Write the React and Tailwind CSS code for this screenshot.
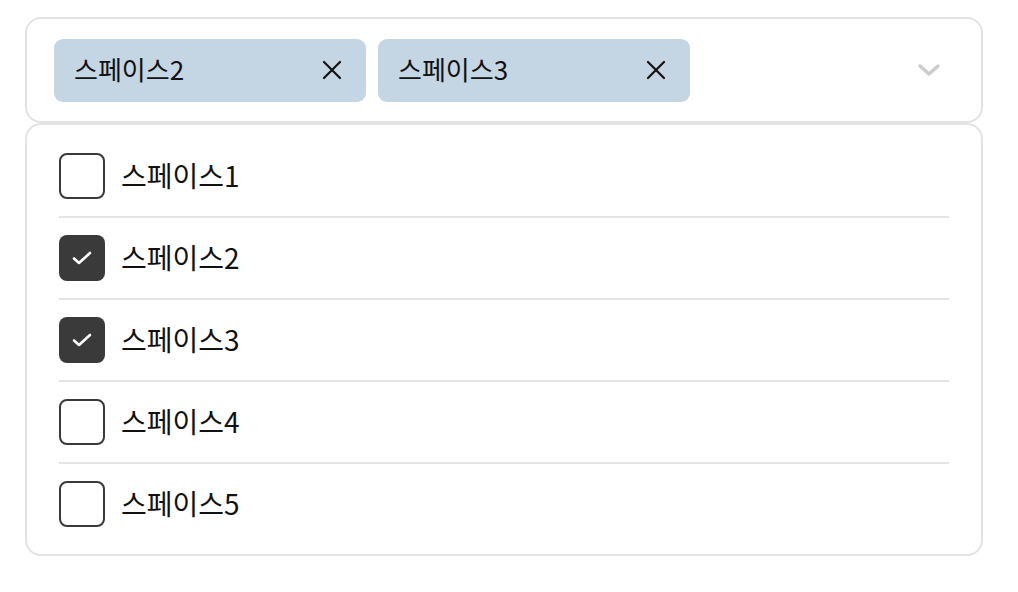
import { useState } from "react";

const spaces = ["스페이스1", "스페이스2", "스페이스3", "스페이스4", "스페이스5"];

const XIcon = () => (
  <svg width="22" height="22" viewBox="0 0 22 22" fill="none">
    <path d="M3 3L19 19M19 3L3 19" stroke="#111" strokeWidth="2.2" strokeLinecap="round" />
  </svg>
);

const Chevron = () => (
  <svg width="24" height="14" viewBox="0 0 24 14" fill="none">
    <path d="M3 3L12 11L21 3" stroke="#cccccc" strokeWidth="3.5" strokeLinecap="round" strokeLinejoin="round" />
  </svg>
);

const Check = () => (
  <svg width="22" height="18" viewBox="0 0 22 18" fill="none">
    <path d="M3 9.5L8 14L19 4" stroke="#fff" strokeWidth="2.6" strokeLinecap="round" strokeLinejoin="round" />
  </svg>
);

const App = () => {
  const [selected, setSelected] = useState(["스페이스2", "스페이스3"]);

  const toggle = (name) => {
    setSelected((prev) =>
      prev.includes(name) ? prev.filter((s) => s !== name) : [...prev, name].sort()
    );
  };

  return (
    <div
      className="w-[1018px] h-[592px] bg-white pt-[17px] pl-[25px]"
      style={{ fontFamily: '"Noto Sans CJK KR", "Noto Sans", sans-serif' }}
    >
      <div className="w-[958px]">
        <div className="h-[106px] border-2 border-[#e3e3e3] rounded-[16px] pl-[27px] pr-[40px] flex items-center justify-between">
          <div className="flex gap-3">
            {selected.map((name) => (
              <div
                key={name}
                className="w-[312px] h-[63px] rounded-[9px] bg-[#c4d5e3] flex items-center justify-between pl-5 pr-[23px]"
              >
                <span className="text-[26px] text-[#111] leading-none -mt-[2px]">{name}</span>
                <button onClick={() => toggle(name)} className="flex items-center">
                  <XIcon />
                </button>
              </div>
            ))}
          </div>
          <Chevron />
        </div>
        <div className="border-2 border-[#e3e3e3] rounded-[16px] px-8 pt-[11px] pb-[10px]">
          {spaces.map((name, i) => {
            const checked = selected.includes(name);
            return (
              <div
                key={name}
                onClick={() => toggle(name)}
                className={
                  "flex items-center gap-4 py-[17px] " +
                  (i < spaces.length - 1 ? "border-b-2 border-[#e3e3e3]" : "")
                }
              >
                {checked ? (
                  <div className="w-[46px] h-[46px] rounded-[8px] bg-[#3a3a3a] flex items-center justify-center">
                    <Check />
                  </div>
                ) : (
                  <div className="w-[46px] h-[46px] rounded-[8px] border-2 border-[#3a3a3a] bg-white" />
                )}
                <span className="text-[28px] text-[#111] leading-none -mt-[3px]">{name}</span>
              </div>
            );
          })}
        </div>
      </div>
    </div>
  );
};

export default App;
